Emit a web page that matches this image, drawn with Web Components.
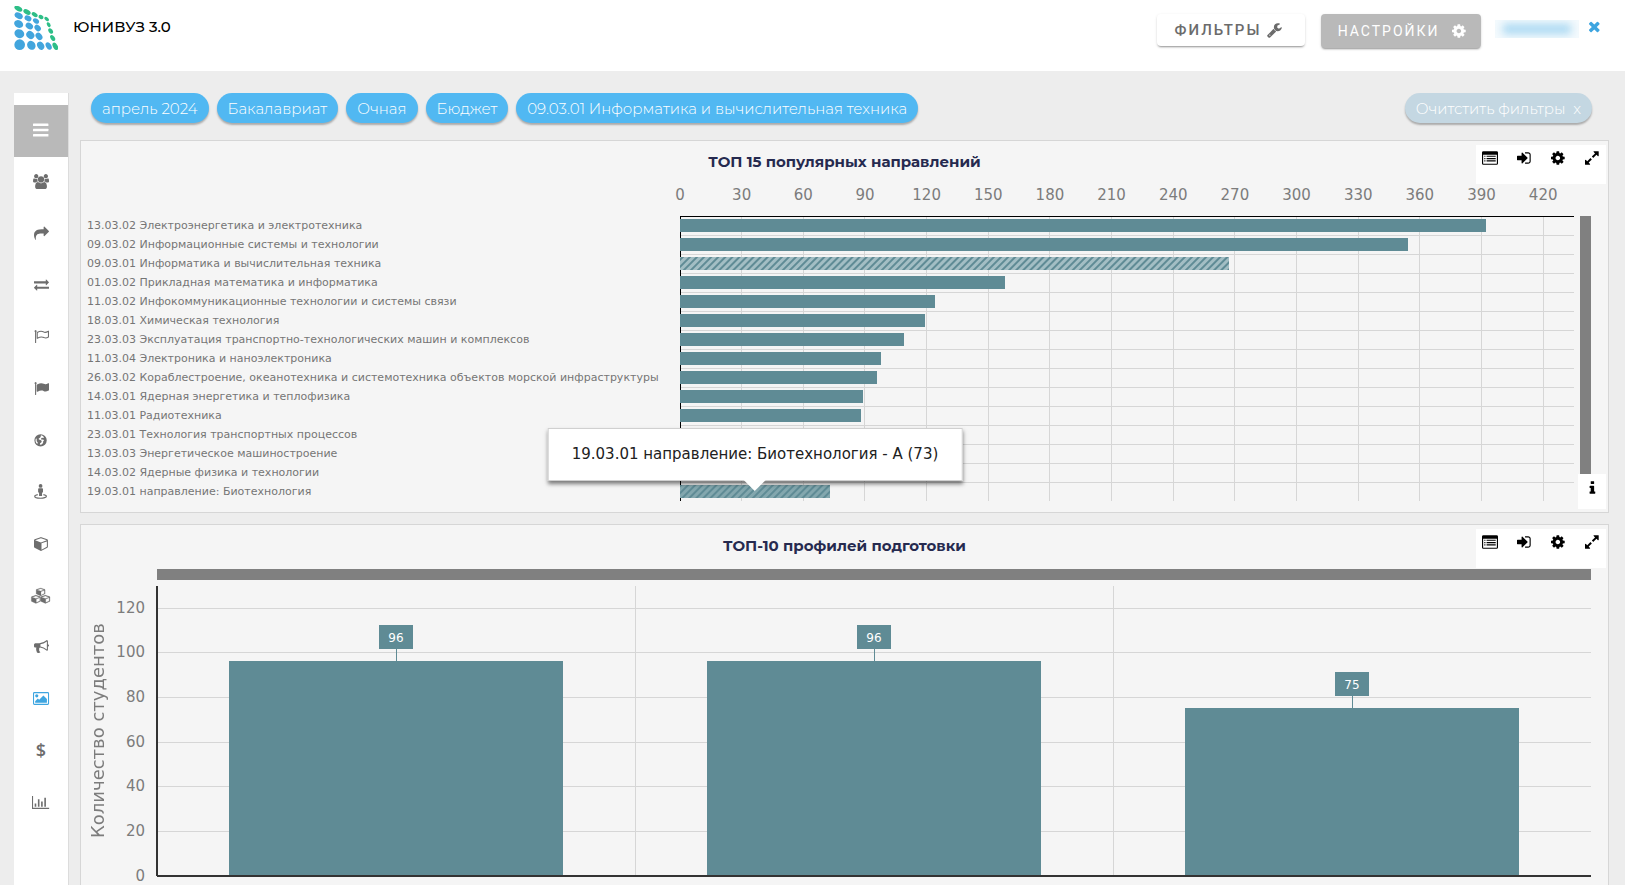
<!DOCTYPE html>
<html lang="ru">
<head>
<meta charset="utf-8">
<meta name="viewport" content="width=device-width, initial-scale=1">
<title>ЮНИВУЗ 3.0</title>
<style>
  html, body { height: 100%; }
  body {
    margin: 0;
    background: #ededed;
    font-family: Montserrat, Inter, "Open Sans", sans-serif;
    overflow: hidden;
  }
</style>
</head>
<body>
<uni-app></uni-app>

<script>
/* Icon set: [viewBox, markup] */
const CUBE = '<path d="M896 1629l640-349v-636l-640 233v752zm-64-865l698-254-698-254-698 254zm832-252v768q0 35-18 65t-49 47l-704 384q-28 16-61 16t-61-16l-704-384q-31-17-49-47t-18-65v-768q0-40 23-73t61-47l704-256q22-8 44-8t44 8l704 256q38 14 61 47t23 73z"/>';
const ICONS = {
  bars: ['0 0 1536 1792', '<rect y="256" width="1536" height="240" rx="50"/><rect y="776" width="1536" height="240" rx="50"/><rect y="1296" width="1536" height="240" rx="50"/>'],
  cog: ['128 0 1536 1792', '<path d="M1152 896q0-106-75-181t-181-75-181 75-75 181 75 181 181 75 181-75 75-181zm512-109v222q0 12-8 23t-20 13l-185 28q-19 54-39 91 35 50 107 138 10 12 10 25t-9 23q-27 37-99 108t-94 71q-12 0-26-9l-138-108q-44 23-91 38-16 136-29 186-7 28-36 28h-222q-14 0-24.5-8.5t-11.5-21.5l-28-184q-49-16-90-37l-141 107q-10 9-25 9-14 0-25-11-126-114-165-168-7-10-7-23 0-12 8-23 15-21 51-66.5t54-70.5q-27-50-41-99l-183-27q-13-2-21-12.5t-8-23.5v-222q0-12 8-23t19-13l186-28q14-46 39-92-40-57-107-138-10-12-10-24 0-10 9-23 26-36 98.5-107.5t94.5-71.5q13 0 26 10l138 107q44-23 91-38 16-136 29-186 7-28 36-28h222q14 0 24.5 8.5t11.5 21.5l28 184q49 16 90 37l142-107q9-9 24-9 13 0 25 10 129 119 165 170 7 8 7 22 0 12-8 23-15 21-51 66.5t-54 70.5q26 50 41 98l183 28q13 2 21 12.5t8 23.5z"/>'],
  wrench: ['64 0 1664 1792', '<path d="M448 1472q0-26-19-45t-45-19-45 19-19 45 19 45 45 19 45-19 19-45zm644-420l-682 682q-37 37-90 37-52 0-91-37l-106-108q-38-36-38-90 0-53 38-91l681-681q39 98 114.5 173.5t173.5 114.5zm634-435q0 39-23 106-47 134-164.5 217.5t-258.5 83.5q-185 0-316.5-131.5t-131.5-316.5 131.5-316.5 316.5-131.5q58 0 121.5 16.5t107.5 46.5q16 11 16 28t-16 28l-293 169v224l193 107q5-3 79-48.5t135.5-81 70.5-35.5q15 0 23.5 10t8.5 25z"/>'],
  times: ['192 64 1408 1792', '<path d="M1490 1322q0 40-28 68l-136 136q-28 28-68 28t-68-28l-294-294-294 294q-28 28-68 28t-68-28l-136-136q-28-28-28-68t28-68l294-294-294-294q-28-28-28-68t28-68l136-136q28-28 68-28t68 28l294 294 294-294q28-28 68-28t68 28l136 136q28 28 28 68t-28 68l-294 294 294 294q28 28 28 68z"/>'],
  expand: ['128 0 1536 1792', '<path d="M883 1056q0 13-10 23l-332 332 144 144q19 19 19 45t-19 45-45 19h-448q-26 0-45-19t-19-45v-448q0-26 19-45t45-19 45 19l144 144 332-332q10-10 23-10t23 10l114 114q10 10 10 23zm781-864v448q0 26-19 45t-45 19-45-19l-144-144-332 332q-10 10-23 10t-23-10l-114-114q-10-10-10-23t10-23l332-332-144-144q-19-19-19-45t19-45 45-19h448q26 0 45 19t19 45z"/>'],
  info: ['512 0 768 1792', '<path d="M1216 1344v128q0 26-19 45t-45 19h-512q-26 0-45-19t-19-45v-128q0-26 19-45t45-19h64v-384h-64q-26 0-45-19t-19-45v-128q0-26 19-45t45-19h384q26 0 45 19t19 45v576h64q26 0 45 19t19 45zm-128-1152v192q0 26-19 45t-45 19h-256q-26 0-45-19t-19-45v-192q0-26 19-45t45-19h256q26 0 45 19t19 45z"/>'],
  list: ['0 0 1792 1792', '<path fill-rule="evenodd" d="M160 128h1472q160 0 160 160v1216q0 160-160 160h-1472q-160 0-160-160v-1216q0-160 160-160zm-32 416v960q0 32 32 32h1472q32 0 32-32v-960z"/><path d="M256 640h128v128h-128zm256 0h1024v128h-1024zM256 896h128v128h-128zm256 0h1024v128h-1024zM256 1152h128v128h-128zm256 0h1024v128h-1024z"/>'],
  signin: ['128 0 1536 1792', '<path d="M1312 896q0 26-19 45l-544 544q-19 19-45 19t-45-19-19-45v-288h-448q-26 0-45-19t-19-45v-384q0-26 19-45t45-19h448v-288q0-26 19-45t45-19 45 19l544 544q19 19 19 45zm352-352v704q0 119-84.5 203.5t-203.5 84.5h-320q-13 0-22.5-9.5t-9.5-22.5q0-4-1-20t-.5-26.5 3-23.5 10-19.5 20.5-6.5h320q66 0 113-47t47-113v-704q0-66-47-113t-113-47h-312l-11.5-1-11.5-3-8-5.5-7-9-2-13.5q0-4-1-20t-.5-26.5 3-23.5 10-19.5 20.5-6.5h320q119 0 203.5 84.5t84.5 203.5z"/>'],
  users: ['0 0 1920 1792', '<path d="M593 896q-162 5-265 128h-134q-82 0-138-40.5t-56-118.5q0-353 124-353 6 0 43.5 21t97.5 42.5 119 21.5q67 0 133-23-5 37-5 66 0 139 81 256zm1071 637q0 120-73 189.5t-194 69.5h-874q-121 0-194-69.5t-73-189.5q0-53 3.5-103.5t14-109 26.5-108.5 43-97.5 62-81 85.5-53.5 111.5-20q10 0 43 21.5t73 48 107 48 135 21.5 135-21.5 107-48 73-48 43-21.5q61 0 111.5 20t85.5 53.5 62 81 43 97.5 26.5 108.5 14 109 3.5 103.5zm-1024-1277q0 106-75 181t-181 75-181-75-75-181 75-181 181-75 181 75 75 181zm704 384q0 159-112.5 271.5t-271.5 112.5-271.5-112.5-112.5-271.5 112.5-271.5 271.5-112.5 271.5 112.5 112.5 271.5zm576 225q0 78-56 118.5t-138 40.5h-134q-103-123-265-128 81-117 81-256 0-29-5-66 66 23 133 23 59 0 119-21.5t97.5-42.5 43.5-21q124 0 124 353zm-128-609q0 106-75 181t-181 75-181-75-75-181 75-181 181-75 181 75 75 181z"/>'],
  share: ['0 0 1792 1792', '<path d="M1792 640q0 26-19 45l-512 512q-19 19-45 19t-45-19-19-45v-256h-224q-98 0-175.5 6t-154 21.5-133 42.5-105.5 69.5-80 101-48.5 138.5-17.5 181q0 55 5 123 0 6 2.5 23.5t2.5 26.5q0 15-8.5 25t-23.5 10q-16 0-28-17-7-9-13-22t-13.5-30-10.5-24q-127-285-127-451 0-199 53-333 162-403 875-403h224v-256q0-26 19-45t45-19 45 19l512 512q19 19 19 45z"/>'],
  exchange: ['0 0 1792 1792', '<path d="M1792 1184v192q0 13-9.5 22.5t-22.5 9.5h-1376v192q0 13-9.5 22.5t-22.5 9.5q-12 0-24-10l-319-320q-9-9-9-22 0-14 9-23l320-320q9-9 23-9 13 0 22.5 9.5t9.5 22.5v192h1376q13 0 22.5 9.5t9.5 22.5zm0-544q0 14-9 23l-320 320q-9 9-23 9-13 0-22.5-9.5t-9.5-22.5v-192h-1376q-13 0-22.5-9.5t-9.5-22.5v-192q0-13 9.5-22.5t22.5-9.5h1376v-192q0-14 9-23t23-9q12 0 24 10l319 319q9 9 9 23z"/>'],
  flago: ['0 0 1792 1792', '<path d="M320 256q0 72-64 110v1266q0 32-32 32h-64q-32 0-32-32v-1266q-64-38-64-110 0-53 37.500-90.500t90.500-37.500 90.500 37.500 37.500 90.500z"/><path fill="none" stroke="currentColor" stroke-width="128" stroke-linejoin="round" d="M384 420q260-150 465-150 130 0 270 70 110 60 200 60 150 0 409-140v700q-200 116-340 116-90 0-200-50-140-72-290-72-200 0-514 160z"/>'],
  flag: ['0 0 1792 1792', '<path d="M320 256q0 72-64 110v1266q0 13-9.500 22.500t-22.500 9.500h-64q-13 0-22.500-9.500t-9.500-22.500v-1266q-64-38-64-110 0-53 37.500-90.500t90.500-37.500 90.500 37.500 37.500 90.500zm1472 64v763q0 25-12.500 38.500t-39.500 27.500q-215 116-369 116-61 0-123.500-22t-108.500-48-115.500-48-142.500-22q-192 0-464 146-17 9-33 9-26 0-45-19t-19-45v-742q0-32 31-55 21-14 79-43 236-120 421-120 107 0 200 29t219 88q38 19 88 19 54 0 117.500-21t110-47 88-47 54.500-21q26 0 45 19t19 45z"/>'],
  globe: ['0 0 14 16', '<path fill-rule="evenodd" d="M7 1.200a6.600 6.600 0 1 1 0 13.200a6.600 6.600 0 1 1 0-13.200zM8 2.300L6.800 3.200l.6.800-1.400 1.200-1 .6.200 1.200 1.700.4 1.400 1.200-.6 1.500-1.200.9-.3 1.200 1.200.2 1.400-.8.9-1.200.1-1.500 1-1.200-1.200-.8-1.500.3-.7-1.100 1-1 1.700.1.500-.8a5.500 5.500 0 0 0-2.600-2.100zM2.200 5.300a5.500 5.500 0 0 0 1.300 6.400l.5-1.500-1.200-1.600.2-1.500z"/>'],
  street: ['0 0 14 16', '<circle cx="7" cy="2" r="2"/><path d="M5.400 4.400h3.200q1 0 1 1v3.400l-1 .4v3.600h-3.200v-3.600l-1-.4v-3.400q0-1 1-1z"/><path fill="none" stroke="currentColor" stroke-width="1.300" d="M4 11.300c-2 .4-3.200 1-3.200 1.700 0 1.200 2.800 2.200 6.200 2.200s6.200-1 6.200-2.200c0-.7-1.200-1.300-3.200-1.700"/>'],
  cube: ['0 0 1664 1792', CUBE],
  cubes: ['0 0 2304 1792', `<g stroke="currentColor" stroke-width="50"><g transform="translate(620 -60) scale(.64 .56)">${CUBE}</g><g transform="translate(40 800) scale(.66 .58)">${CUBE}</g><g transform="translate(1170 800) scale(.66 .58)">${CUBE}</g></g>`],
  bullhorn: ['0 0 1792 1792', '<path d="M1664 640q53 0 90.500 37.500t37.500 90.500-37.500 90.500-90.500 37.500v384q0 52-38 90t-90 38q-417-347-812-380-58 19-91 66t-31 100.500 40 92.500q-20 33-23 65.500t6 58 33.500 55 48 50 61.500 50.500q-29 58-111.500 83t-168.500 11.500-132-55.500q-7-23-29.500-87.500t-32-94.500-23-89-15-101 3.500-98.500 22-110.500h-122q-66 0-113-47t-47-113v-192q0-66 47-113t113-47h480q435 0 896-384 52 0 90 38t38 90v384zm-128 604v-954q-394 302-768 343v270q377 42 768 341z"/>'],
  picture: ['0 0 1920 1792', '<path fill-rule="evenodd" d="M160 128h1600q160 0 160 160v1216q0 160-160 160h-1600q-160 0-160-160v-1216q0-160 160-160zm0 128q-32 0-32 32v1216q0 32 32 32h1600q32 0 32-32v-1216q0-32-32-32z"/><circle cx="450" cy="580" r="190"/><path d="M256 1408v-192l320-320 160 160 512-512 416 416v448z"/>'],
  chart: ['0 0 2048 1792', '<path d="M0 128h128v1408h1920v128h-2048zM320 1024h192v384h-192zm384-512h192v896h-192zm384 256h192v640h-192zm384-448h192v1088h-192z"/>']
};

const defineElement = (name, html, setup) => {
  const template = document.createElement('template');
  template.innerHTML = html;
  customElements.define(name, class extends HTMLElement {
    connectedCallback() {
      if (this.shadowRoot) return;
      this.attachShadow({ mode: 'open' }).append(template.content.cloneNode(true));
      if (setup) setup(this, this.shadowRoot);
    }
  });
};

defineElement('uni-icon', `
  <style>
    :host { display: inline-flex; height: 16px; flex: none; }
    svg { display: block; height: 100%; width: auto; fill: currentColor; overflow: visible; }
  </style>`, (host, root) => {
  const [box, body] = ICONS[host.getAttribute('name')];
  root.innerHTML += `<svg viewBox="${box}" aria-hidden="true">${body}</svg>`;
});

defineElement('uni-logo', `
  <style>
    :host { display: block; width: 44px; height: 44px; }
    svg { display: block; width: 100%; height: 100%; }
  </style>
  <svg viewBox="42 18 132 132" role="img" aria-label="Логотип">
    <g fill="#2dbe87">
      <ellipse cx="55" cy="26" rx="13" ry="7" transform="rotate(28 55 26)"/>
      <ellipse cx="81" cy="36" rx="12" ry="7" transform="rotate(32 81 36)"/>
      <ellipse cx="104" cy="44" rx="10" ry="6" transform="rotate(35 104 44)"/>
      <ellipse cx="123" cy="51" rx="8" ry="6" transform="rotate(30 123 51)"/>
      <ellipse cx="140" cy="57" rx="8" ry="5" transform="rotate(40 140 57)"/>
      <ellipse cx="146" cy="74" rx="8" ry="5" transform="rotate(60 146 74)"/>
      <ellipse cx="152" cy="93" rx="9" ry="6" transform="rotate(55 152 93)"/>
      <ellipse cx="158" cy="114" rx="10" ry="6" transform="rotate(55 158 114)"/>
      <ellipse cx="166" cy="139" rx="12" ry="7" transform="rotate(60 166 139)"/>
    </g>
    <g fill="#42a5dd">
      <ellipse cx="56" cy="47" rx="13" ry="9" transform="rotate(28 56 47)"/>
      <ellipse cx="84" cy="55" rx="11" ry="8" transform="rotate(32 84 55)"/>
      <ellipse cx="108" cy="63" rx="10" ry="7" transform="rotate(35 108 63)"/>
      <ellipse cx="56" cy="72" rx="14" ry="11" transform="rotate(28 56 72)"/>
      <ellipse cx="88" cy="78" rx="12" ry="9" transform="rotate(35 88 78)"/>
      <ellipse cx="113" cy="84" rx="11" ry="8" transform="rotate(45 113 84)"/>
      <ellipse cx="58" cy="101" rx="15" ry="13" transform="rotate(28 58 101)"/>
      <ellipse cx="91" cy="105" rx="13" ry="11" transform="rotate(45 91 105)"/>
      <ellipse cx="117" cy="109" rx="12" ry="9" transform="rotate(50 117 109)"/>
      <circle cx="59" cy="134" r="16"/>
      <ellipse cx="94" cy="136" rx="14" ry="12" transform="rotate(55 94 136)"/>
      <ellipse cx="122" cy="137" rx="13" ry="10" transform="rotate(60 122 137)"/>
      <ellipse cx="146" cy="138" rx="12" ry="8" transform="rotate(60 146 138)"/>
    </g>
  </svg>`);

defineElement('uni-button', `
  <style>
    :host { display: block; }
    button {
      display: flex; align-items: center; justify-content: center; gap: 6px;
      box-sizing: border-box; width: 148px; height: 32px; padding: 0 6px 0 0;
      border: 0; border-radius: 4px; background: #fff; color: #6b6b6b;
      font: 500 15px Roboto, sans-serif; letter-spacing: 2px;
      box-shadow: 0 2px 2px -1px rgba(0,0,0,.35), 0 1px 3px rgba(0,0,0,.12);
    }
    :host([primary]) button { width: 160px; height: 34px; padding: 0; gap: 12px; background: #b9b9b9; color: #fff; font-size: 14px; font-weight: 400; }
  </style>
  <button type="button"><slot></slot></button>`);

defineElement('uni-header', `
  <style>
    :host { display: flex; align-items: flex-start; box-sizing: border-box; height: 71px; padding: 6px 24px 0 14px; background: #fff; }
    h1 { margin: 10px auto 0 15px; font-size: 15px; line-height: 22px; font-weight: 500; color: #000; }
    .actions { display: flex; gap: 16px; margin-top: 8px; }
    .user { width: 84px; height: 18px; margin: 14px 9px 0 14px; overflow: hidden; background: #f4fafd; }
    .user span { display: block; width: 68px; height: 10px; margin: 4px 8px; background: #a9d8f2; filter: blur(4px); }
    .close { display: flex; margin-top: 13px; padding: 0; border: 0; background: none; color: #3ea5e0; }
  </style>
  <uni-logo></uni-logo>
  <h1>ЮНИВУЗ 3.0</h1>
  <div class="actions">
    <uni-button>ФИЛЬТРЫ<uni-icon name="wrench"></uni-icon></uni-button>
    <uni-button primary>НАСТРОЙКИ<uni-icon name="cog"></uni-icon></uni-button>
  </div>
  <div class="user"><span></span></div>
  <button class="close" type="button" aria-label="Выйти"><uni-icon name="times"></uni-icon></button>`);

defineElement('uni-sidebar', `
  <style>
    :host { display: block; box-sizing: border-box; width: 55px; padding-top: 12px; background: #fff; border-right: 1px solid #dcdcdc; }
    nav { display: grid; grid-auto-rows: 1fr; height: 724px; }
    a, button { display: flex; align-items: center; justify-content: center; color: #6d6d6d; text-decoration: none; }
    button { padding: 0 0 2px; border: 0; background: #b9b9b9; color: #fff; }
    button uni-icon { height: 18px; }
    a uni-icon { height: 15px; }
    a { padding-bottom: 2px; }
    a[aria-current] { color: #3ea5e0; }
    .money { font: 600 18px "Open Sans", sans-serif; }
  </style>
  <nav>
    <button type="button" aria-label="Меню"><uni-icon name="bars"></uni-icon></button>
    <a href="#users" aria-label="Студенты"><uni-icon name="users"></uni-icon></a>
    <a href="#share" aria-label="Выпуск"><uni-icon name="share"></uni-icon></a>
    <a href="#exchange" aria-label="Переводы"><uni-icon name="exchange"></uni-icon></a>
    <a href="#start" aria-label="Начало"><uni-icon name="flago"></uni-icon></a>
    <a href="#finish" aria-label="Завершение"><uni-icon name="flag"></uni-icon></a>
    <a href="#world" aria-label="География"><uni-icon name="globe"></uni-icon></a>
    <a href="#person" aria-label="Персоны"><uni-icon name="street"></uni-icon></a>
    <a href="#cube" aria-label="Куб"><uni-icon name="cube"></uni-icon></a>
    <a href="#cubes" aria-label="Кубы"><uni-icon name="cubes"></uni-icon></a>
    <a href="#news" aria-label="Объявления"><uni-icon name="bullhorn"></uni-icon></a>
    <a href="#dashboards" aria-label="Панели" aria-current="page"><uni-icon name="picture"></uni-icon></a>
    <a href="#finance" aria-label="Финансы" class="money">$</a>
    <a href="#charts" aria-label="Графики"><uni-icon name="chart"></uni-icon></a>
  </nav>`);

defineElement('uni-chip', `
  <style>
    :host { display: block; }
    button {
      display: block; box-sizing: border-box; height: 30px; padding: 1px 11px 0; border: 0; border-radius: 15px;
      background: #51b8f2; color: #fff; font: inherit; font-size: 15px; font-weight: 300; line-height: 29px; white-space: pre;
      box-shadow: 0 2px 2px rgba(0,0,0,.28);
    }
    :host([muted]) button { background: #c4d7e2; }
  </style>
  <button type="button"><slot></slot></button>`);

defineElement('uni-panel', `
  <style>
    :host { display: block; position: relative; box-sizing: border-box; height: 373px; flex: none; border: 1px solid #d6d6d6; background: #f5f5f5; }
    h2 { margin: 11px 0 0; text-align: center; font-size: 15px; line-height: 20px; font-weight: 700; color: #262a4f; }
    .tools { position: absolute; top: 4px; right: 2px; display: flex; justify-content: space-between; box-sizing: border-box; width: 130px; height: 39px; padding-top: 5px; background: #fff; }
    .tools button { display: flex; width: 28px; justify-content: center; align-items: flex-start; padding: 0; border: 0; background: none; color: #000; }
  </style>
  <h2></h2>
  <slot></slot>
  <div class="tools">
    <button type="button" aria-label="Таблица"><uni-icon name="list"></uni-icon></button>
    <button type="button" aria-label="Экспорт"><uni-icon name="signin"></uni-icon></button>
    <button type="button" aria-label="Параметры"><uni-icon name="cog"></uni-icon></button>
    <button type="button" aria-label="Развернуть"><uni-icon name="expand"></uni-icon></button>
  </div>`, (host, root) => {
  root.querySelector('h2').textContent = host.getAttribute('heading');
});

/* Horizontal bar chart of the most popular programmes */
const PROGRAMMES = [
  ['13.03.02 Электроэнергетика и электротехника', 392],
  ['09.03.02 Информационные системы и технологии', 354],
  ['09.03.01 Информатика и вычислительная техника', 267, 'selected'],
  ['01.03.02 Прикладная математика и информатика', 158],
  ['11.03.02 Инфокоммуникационные технологии и системы связи', 124],
  ['18.03.01 Химическая технология', 119],
  ['23.03.03 Эксплуатация транспортно-технологических машин и комплексов', 109],
  ['11.03.04 Электроника и наноэлектроника', 98],
  ['26.03.02 Кораблестроение, океанотехника и системотехника объектов морской инфраструктуры', 96],
  ['14.03.01 Ядерная энергетика и теплофизика', 89],
  ['11.03.01 Радиотехника', 88],
  ['23.03.01 Технология транспортных процессов', 82],
  ['13.03.03 Энергетическое машиностроение', 78],
  ['14.03.02 Ядерные физика и технологии', 75],
  ['19.03.01 направление: Биотехнология', 73, 'hovered']
];

defineElement('programme-chart', `
  <style>
    :host { display: grid; grid-template-columns: minmax(593px, max-content) 1fr 11px; margin: 44px 17px 0 6px; font-family: "DejaVu Sans", sans-serif; }
    ol { margin: 0 12px 0 0; padding: 0; list-style: none; font-size: 11px; line-height: 19px; color: #757575; }
    li { height: 19px; white-space: nowrap; }
    .plot { position: relative; margin-right: 6px; }
    svg { display: block; width: 100%; height: 285px; overflow: visible; }
    line, .bar { shape-rendering: crispEdges; }
    text { font-size: 15px; fill: #7c7c7c; text-anchor: middle; }
    .grid { stroke: #d6d6d6; }
    .axis { stroke: #000; }
    .scroll { background: #808080; }
    .tip {
      position: absolute; left: calc(73% / 4.35 / 2); bottom: 20px; transform: translateX(-50%);
      box-sizing: border-box; padding: 0 23px; border: 1px solid #d0d0d0; background: #fff; color: #212121;
      font-size: 15px; line-height: 51px; white-space: nowrap; box-shadow: 0 3px 4px rgba(0,0,0,.5);
    }
    .tip::after { content: ""; position: absolute; left: calc(50% - 11px); top: 100%; border: 11px solid transparent; border-top-color: #fff; border-bottom: 0; }
    .info { position: absolute; right: 2px; bottom: 3px; display: flex; justify-content: center; align-items: flex-start; width: 28px; height: 35px; padding: 6px 0 0; border: 0; background: #fff; color: #000; }
  </style>
  <ol></ol>
  <div class="plot"><svg></svg><div class="tip" role="tooltip">19.03.01 направление: Биотехнология - А (73)</div></div>
  <div class="scroll"></div>
  <button class="info" type="button" aria-label="Справка"><uni-icon name="info"></uni-icon></button>`, (host, root) => {
  const max = 435, row = 19;
  const x = v => (v / max * 100) + '%';
  root.querySelector('ol').innerHTML = PROGRAMMES.map(([name]) => `<li>${name}</li>`).join('');
  const hatch = (id, light) => `<pattern id="${id}" width="5" height="5" patternUnits="userSpaceOnUse" patternTransform="rotate(45)"><rect width="5" height="5" fill="${light}"/><rect width="2" height="5" fill="#5f8b95"/></pattern>`;
  let s = `<defs>${hatch('selected', '#a3bec4')}${hatch('hovered', '#83a7ae')}</defs>`;
  for (let v = 0; v <= 420; v += 30) {
    if (v) s += `<line class="grid" x1="${x(v)}" x2="${x(v)}" y1="0" y2="285"/>`;
    s += `<text x="${x(v)}" y="-16">${v}</text>`;
  }
  for (let i = 1; i < PROGRAMMES.length; i++) s += `<line class="grid" x1="0" x2="100%" y1="${i * row}" y2="${i * row}"/>`;
  s += '<line class="axis" x1="0" x2="0" y1="0" y2="285"/><line class="axis" x1="0" x2="100%" y1="0" y2="0"/>';
  PROGRAMMES.forEach(([, v, state], i) => {
    s += `<rect class="bar" x="0" y="${i * row + 3}" width="${x(v)}" height="13" fill="${state ? `url(#${state})` : '#5f8b95'}"/>`;
  });
  root.querySelector('svg').innerHTML = s;
});

/* Column chart of the study profiles */
defineElement('profile-chart', `
  <style>
    :host { display: grid; grid-template-columns: 24px 47px 1fr; margin: 13px 17px 0 5px; font-family: "DejaVu Sans", sans-serif; color: #7c7c7c; }
    .scroll { grid-column: 3; height: 11px; margin-bottom: 6px; background: #808080; }
    .title { grid-row: 2; writing-mode: vertical-rl; transform: rotate(180deg); text-align: center; font-size: 18px; line-height: 24px; white-space: nowrap; }
    .values { grid-row: 2; }
    div > svg { display: block; width: 100%; height: 290px; overflow: visible; }
    svg { overflow: visible; }
    line, rect { shape-rendering: crispEdges; }
    .values text { font-size: 15px; fill: #7c7c7c; text-anchor: end; }
    .grid { stroke: #d6d6d6; }
    .axis { stroke: #333; stroke-width: 2; }
    .bar { fill: #5f8b95; }
    .link { stroke: #5f8b95; }
    .mark { font-size: 12px; fill: #fff; text-anchor: middle; }
  </style>
  <div class="scroll"></div>
  <div class="title">Количество студентов</div>
  <div class="values"><svg></svg></div>
  <div class="plot"><svg></svg></div>`, (host, root) => {
  const data = [96, 96, 75], max = 130, height = 290;
  const y = v => Math.floor(height - v / max * height);
  const [labels, plot] = root.querySelectorAll('svg');
  let s = '', t = '';
  for (let v = 0; v <= 120; v += 20) {
    t += `<text x="35" y="${y(v) + 5}">${v}</text>`;
    if (v) s += `<line class="grid" x1="0" x2="100%" y1="${y(v)}" y2="${y(v)}"/>`;
  }
  for (let i = 1; i < 3; i++) s += `<line class="grid" x1="${i * 100 / 3}%" x2="${i * 100 / 3}%" y1="0" y2="${height}"/>`;
  data.forEach((v, i) => {
    s += `<rect class="bar" x="${(i + .15) * 100 / 3}%" width="${70 / 3}%" y="${y(v)}" height="${height - y(v)}"/>
      <svg x="${(i + .5) * 100 / 3}%"><line class="link" x1="0" x2="0" y1="${y(v) - 12}" y2="${y(v)}"/>
      <rect class="bar" x="-17" y="${y(v) - 36}" width="34" height="24"/>
      <text class="mark" x="0" y="${y(v) - 19}">${v}</text></svg>`;
  });
  s += `<line class="axis" x1="0" x2="0" y1="0" y2="${height}"/><line class="axis" x1="0" x2="100%" y1="${height}" y2="${height}"/>`;
  labels.innerHTML = t;
  plot.innerHTML = s;
});

defineElement('uni-app', `
  <style>
    :host { display: flex; flex-direction: column; height: 100vh; }
    .page { display: grid; grid-template-columns: 55px minmax(0, 1fr); column-gap: 11px; flex: 1; min-height: 0; padding: 22px 16px 0 14px; overflow: hidden; }
    main { display: flex; flex-direction: column; gap: 11px; min-height: 0; }
    .filters { display: flex; gap: 8px; padding: 0 17px 6px 11px; }
    .filters uni-chip[muted] { margin-left: auto; }
  </style>
  <uni-header></uni-header>
  <div class="page">
    <uni-sidebar></uni-sidebar>
    <main>
      <div class="filters">
        <uni-chip>апрель 2024</uni-chip>
        <uni-chip>Бакалавриат</uni-chip>
        <uni-chip>Очная</uni-chip>
        <uni-chip>Бюджет</uni-chip>
        <uni-chip>09.03.01 Информатика и вычислительная техника</uni-chip>
        <uni-chip muted>Очитстить фильтры&nbsp; x</uni-chip>
      </div>
      <uni-panel heading="ТОП 15 популярных направлений"><programme-chart></programme-chart></uni-panel>
      <uni-panel heading="ТОП-10 профилей подготовки"><profile-chart></profile-chart></uni-panel>
    </main>
  </div>`);
</script>
</body>
</html>
